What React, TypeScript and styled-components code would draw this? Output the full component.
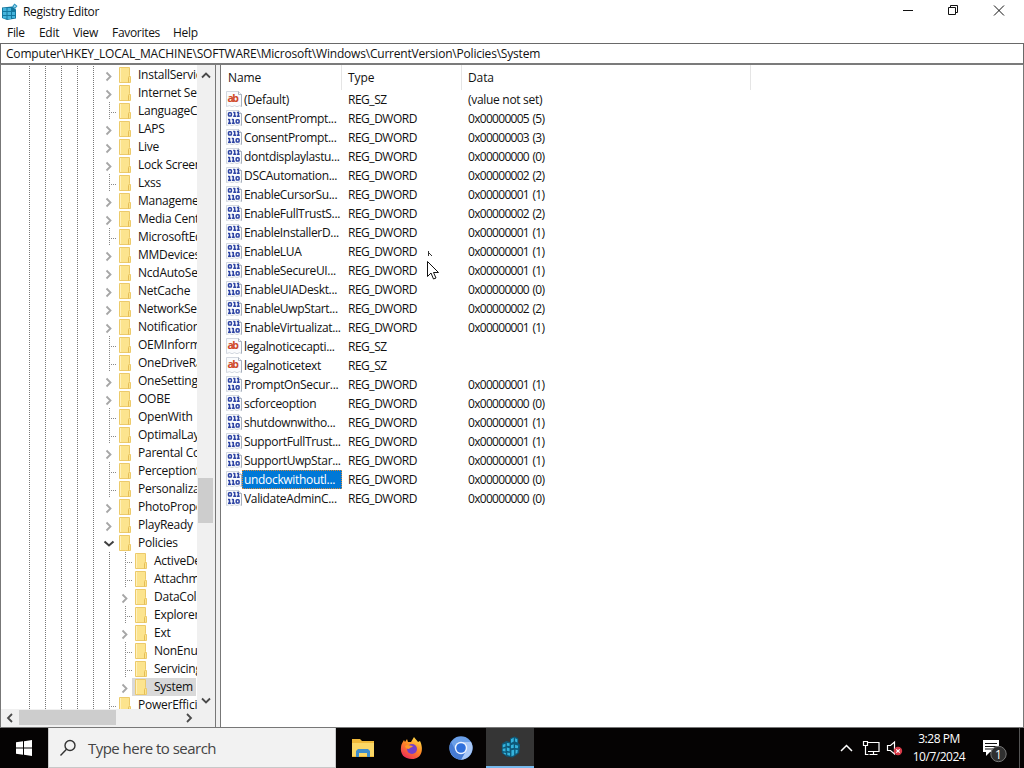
import React from 'react';
import styled, { createGlobalStyle, css } from 'styled-components';

const Global = createGlobalStyle`
  * { box-sizing: border-box; }
  body { margin: 0; overflow: hidden; background: #fff; }
`;

const Screen = styled.div`
  width: 1024px; height: 768px; display: flex; flex-direction: column;
  font-family: "Open Sans", "Noto Sans", sans-serif; font-size: 12px; color: #111; background: #fff;
  white-space: nowrap; overflow: hidden; cursor: default;
`;
const TitleBar = styled.header`height: 24px; display: flex; align-items: center; padding-left: 2px; gap: 5px;`;
const Title = styled.span`flex: 1; line-height: 24px; letter-spacing: -0.34px;`;
const Captions = styled.div`display: flex; height: 24px; svg { display: block; }`;
const MenuBar = styled.nav`height: 19px; display: flex; padding-left: 7px; line-height: 18px;`;
const MenuItem = styled.span<{ $w: number }>`width: ${p => p.$w}px; letter-spacing: -0.3px;`;
const Address = styled.div`
  height: 22px; border: 1px solid #696969; border-bottom: 2px solid #7b7b7b; padding-left: 5px;
  line-height: 20px; letter-spacing: -0.2px;
`;
const Body = styled.main`height: 663px; display: flex; background: #f0f0f0; gap: 4px; border-bottom: 1px solid #777;`;
const TreePane = styled.section`
  width: 216px; border-left: 1px solid #777; border-right: 1px solid #777; display: flex; flex-direction: column; background: #f0f0f0;
`;
const TreeTop = styled.div`height: 644px; display: flex;`;
const Tree = styled.div`width: 196px; overflow: hidden; padding-top: 1px; background: #fff;`;
const TreeRow = styled.div`height: 18px; display: flex; align-items: center; width: 300px; padding-left: 20px;`;
const Guide = styled.svg`width: 16px; height: 18px; flex: none; display: block;`;
const Key = styled.span<{ $on?: boolean }>`
  display: flex; align-items: center; height: 18px; line-height: 18px; margin-left: -1px; padding-left: 3px; padding-right: 3px;
  letter-spacing: -0.25px; background: ${p => (p.$on ? '#d9d9d9' : 'transparent')};
  svg { margin-right: 7px; flex: none; }
`;
const VBar = styled.div`
  width: 18px; background: #f0f0f0; display: flex; flex-direction: column; align-items: center;
  justify-content: space-between; position: relative; padding: 6px 1px 4px 0;
`;
const VThumb = styled.i`position: absolute; left: 1px; top: 413px; width: 15px; height: 45px; background: #cdcdcd;`;
const HBar = styled.div`height: 18px; width: 196px; background: #f0f0f0; display: flex; align-items: center; padding: 0 4px 1px 5px;`;
const HThumb = styled.i`width: 97px; height: 15px; background: #cdcdcd; margin: 0 auto 0 5px;`;
const ListPane = styled.section`flex: 1; background: #fff; border-left: 1px solid #777; border-right: 1px solid #777;`;
const columns = css`display: grid; grid-template-columns: 121px 120px 289px 1fr;`;
const Head = styled.div`${columns} height: 25px; line-height: 25px; letter-spacing: -0.1px;`;
const HeadCell = styled.span`padding-left: 7px; border-right: 1px solid #e5e5e5; &:last-child { border: 0; } &:not(:first-child) { padding-left: 6px; }`;
const Row = styled.div`${columns} height: 19px; line-height: 19px;`;
const NameCell = styled.span`display: flex; align-items: center; padding-left: 5px; svg { flex: none; }`;
const Name = styled.span<{ $on?: boolean }>`
  height: 19px; line-height: 19px; padding: 0 0 0 2px; letter-spacing: -0.33px;
  ${p => p.$on && css`background: #0078d7; color: #fff; width: 100px; outline: 1px dotted #d58a3a; outline-offset: -1px;`}
`;
const TypeCell = styled.span`padding-left: 6px; letter-spacing: -0.48px;`;
const DataCell = styled.span<{ $text: boolean }>`
  padding-left: 6px; letter-spacing: ${p => (p.$text ? -0.3 : -0.7)}px; word-spacing: ${p => (p.$text ? 0 : 1)}px;
`;
const Taskbar = styled.footer`height: 40px; display: flex; background: #050303; color: #fff;`;
const Start = styled.div`width: 48px; display: grid; place-items: center;`;
const Search = styled.div`
  width: 288px; background: #f2f2f2; border: 1px solid #c8c8c8; border-top: 0; color: #444; display: flex; align-items: center;
  font-size: 15px; padding-left: 10px; gap: 11px; letter-spacing: -0.53px;
`;
const TaskButton = styled.div<{ $on?: boolean; $ml?: number }>`
  width: 48px; height: 40px; margin-left: ${p => p.$ml ?? 0}px; display: grid; place-items: center;
  ${p => p.$on && css`background: #353535; border-bottom: 2px solid #76b9ed;`}
`;
const Tray = styled.div`margin-left: auto; display: flex; align-items: center;`;
const Clock = styled.div`width: 66px; text-align: center; line-height: 18px; letter-spacing: -0.48px;`;
const Pointer = styled.svg`position: absolute; left: 426px; top: 249px;`;

const RegIcon = () => (
  <svg width="16" height="18" viewBox="0 0 16 18">
    <path d="M0 4.500L10 3.500l4 3v9l-9 1.500-5-2z" fill="#14779f" />
    <path d="M1 5h3.500v3H1zM5.500 5h3.500v3H5.500zM1 9h3.500v3H1zM5.500 9h3.500v3H5.500zM10 9h3v3h-3zM1 13h3.500v2.500H1zM5.500 13h3.500v3H5.500zM10 13h3v2h-3z" fill="#45b4dc" />
    <path d="M12.500 0.500l3 2.500-2.500 3-3-2.500z" fill="#2f98c2" /><path d="M12.700 2l1.300 1.200-1.200 1.200-1.200-1.200z" fill="#a9def0" />
  </svg>
);
const RegCubes = () => (
  <svg width="21" height="24" viewBox="0 0 23 25">
    <path d="M2 9l5-3 4 1V3l5-2 4 2v5l2 2-1 9-7 5-7-1-5-4z" fill="#0e5878" />
    <path d="M3 10l3-1v3l-3 1zM7.500 8l3 .5v3l-3-.5zM12 4l3-1.500v4L12 8zM16.500 3l2.500 1v3.500l-2.500-1zM3 14.500l3-.5v3.500l-3-.5zM7.500 13l3 1v3.500l-3-1zM12 10.500l3-1v4l-3 .5zM16.500 10l3.500 1-.5 3-3-.5zM4 18.500l2.500.5v2l-2.500-1zM8 18.500l3 .5v3l-3-.7zM12.500 16l3-.5v6l-3 1zM17 15.500l2.500.3-.5 3.200-2 1z" fill="#35b3dc" />
  </svg>
);
const Folder = () => (
  <svg width="12" height="16" viewBox="0 0 12 16">
    <path d="M0.500 0.500h10v8l1 1v6h-11z" fill="#fce48e" stroke="#ecca6b" />
    <path d="M9.500 15.500v-5l1-1.500" fill="none" stroke="#e5bd55" /><path d="M1.500 1v14" stroke="#fff1bd" />
  </svg>
);
const Arrow = ({ d, w = 10, h = 8 }: { d: string; w?: number; h?: number }) => (
  <svg width={w} height={h}><path d={d} fill="none" stroke="#4a4a4a" strokeWidth="1.800" /></svg>
);
const ValueIcon = ({ sz }: { sz: boolean }) => (
  <svg width="16" height="17" viewBox="0 0 16 17">
    <path d="M0.500 0.500h12l3 3v12l-2-.8-2.500 1-2.500-1-2.500 1-2.500-1-3 .8z" fill="#fafbfd" stroke="#c8ced8" strokeWidth=".8" />
    <path d="M12.500 .5v3h3M15.500 3.500v12" fill="none" stroke="#9ca6b4" strokeWidth=".8" />
    {sz ? (
      <text x="1.500" y="11" fontSize="10.500" fontWeight="700" fontFamily="Open Sans" fill="#cf4a2a" textLength="11.500">ab</text>
    ) : (
      <g fill="none" stroke="#2e44a4" strokeWidth="1.500">
        <rect x="2.500" y="2.700" width="2.900" height="3.400" rx=".8" />
        <path d="M8.700 2v4M12.400 2v4M7.200 2.600h1.500M10.900 2.600h1.500M7.200 6.300h3M10.900 6.300h2.800" />
        <path d="M3.500 9v4M7.300 9v4M2 9.600h1.500M5.800 9.600h1.500M2 13.200h3M5.800 13.200h3" />
        <rect x="10.200" y="9.700" width="2.900" height="3.400" rx=".8" />
      </g>
    )}
  </svg>
);

// level 0 sits directly under CurrentVersion; level 1 under Policies
type Node = [label: string, state: '>' | '-' | 'v', level?: number];
const nodes: Node[] = [
  ['InstallService', '>'], ['Internet Settings', '>'], ['LanguageComponents', '-'], ['LAPS', '>'], ['Live', '>'],
  ['Lock Screen', '>'], ['Lxss', '-'], ['Management', '>'], ['Media Center', '>'], ['MicrosoftEdge', '-'],
  ['MMDevices', '>'], ['NcdAutoSetup', '>'], ['NetCache', '>'], ['NetworkServices', '>'], ['Notifications', '>'],
  ['OEMInformation', '-'], ['OneDriveRamps', '-'], ['OneSettings', '>'], ['OOBE', '>'], ['OpenWith', '-'],
  ['OptimalLayout', '-'], ['Parental Controls', '>'], ['PerceptionSimulation', '-'], ['Personalization', '-'],
  ['PhotoPropertyHandler', '>'], ['PlayReady', '>'], ['Policies', 'v'],
  ['ActiveDesktop', '-', 1], ['Attachments', '-', 1], ['DataCollection', '>', 1], ['Explorer', '-', 1], ['Ext', '>', 1],
  ['NonEnum', '-', 1], ['Servicing', '-', 1], ['System', '>', 1], ['PowerEfficiency', '-'],
];
const values: [string, string][] = [
  ['(Default)', '(value not set)'], ['ConsentPrompt...', '5'], ['ConsentPrompt...', '3'], ['dontdisplaylastu...', '0'],
  ['DSCAutomation...', '2'], ['EnableCursorSu...', '1'], ['EnableFullTrustS...', '2'], ['EnableInstallerD...', '1'],
  ['EnableLUA', '1'], ['EnableSecureUI...', '1'], ['EnableUIADeskt...', '0'], ['EnableUwpStart...', '2'],
  ['EnableVirtualizat...', '1'], ['legalnoticecapti...', ''], ['legalnoticetext', ''], ['PromptOnSecur...', '1'],
  ['scforceoption', '0'], ['shutdownwitho...', '1'], ['SupportFullTrust...', '1'], ['SupportUwpStar...', '1'],
  ['undockwithoutl...', '0'], ['ValidateAdminC...', '0'],
];

const Line = () => <Guide><path d="M8.500 0v18" stroke="#777" strokeDasharray="1 1" /></Guide>;
const Branch = ({ state }: { state: Node[1] }) => (
  <Guide>
    {state === '-' && <path d="M8.500 0v18M8 10.500h8" stroke="#888" strokeDasharray="1 1" fill="none" />}
    {state === '>' && <path d="M5.500 6.500l4 4-4 4" stroke="#a6a6a6" strokeWidth="1.800" fill="none" />}
    {state === 'v' && <path d="M3.500 7.500l4.500 4 4.500-4" stroke="#404040" strokeWidth="2" fill="none" />}
  </Guide>
);

export default function App() {
  return (
    <Screen>
      <Global />
      <TitleBar>
        <RegIcon /><Title>Registry Editor</Title>
        <Captions>
          <svg width="138" height="24" fill="none" stroke="#111">
            <path d="M17 10.500h10M108 5.500l10 10M118 5.500l-10 10" />
            <path d="M62.500 7.500h7v7h-7zM64.500 7v-1.500h7v7h-1.500" />
          </svg>
        </Captions>
      </TitleBar>
      <MenuBar>
        <MenuItem $w={32}>File</MenuItem><MenuItem $w={34}>Edit</MenuItem><MenuItem $w={39}>View</MenuItem>
        <MenuItem $w={61}>Favorites</MenuItem><MenuItem $w={40}>Help</MenuItem>
      </MenuBar>
      <Address>Computer\HKEY_LOCAL_MACHINE\SOFTWARE\Microsoft\Windows\CurrentVersion\Policies\System</Address>
      <Body>
        <TreePane>
          <TreeTop>
            <Tree>
              {nodes.map(([label, state, level = 0]) => (
                <TreeRow key={label}>
                  {Array.from({ length: 5 + level }, (_, i) => <Line key={i} />)}
                  <Branch state={state} />
                  <Key $on={label === 'System'}><Folder />{label}</Key>
                </TreeRow>
              ))}
            </Tree>
            <VBar>
              <Arrow d="M1 6.500l4-4 4 4" /><VThumb /><Arrow d="M1 1.500l4 4 4-4" />
            </VBar>
          </TreeTop>
          <HBar>
            <Arrow w={8} h={10} d="M6 1l-4 4 4 4" /><HThumb /><Arrow w={8} h={10} d="M2 1l4 4-4 4" />
          </HBar>
        </TreePane>
        <ListPane>
          <Head><HeadCell>Name</HeadCell><HeadCell>Type</HeadCell><HeadCell>Data</HeadCell><HeadCell /></Head>
          {values.map(([name, v], i) => {
            const sz = v.length !== 1;
            return (
              <Row key={i}>
                <NameCell><ValueIcon sz={sz} /><Name $on={i === 20}>{name}</Name></NameCell>
                <TypeCell>{sz ? 'REG_SZ' : 'REG_DWORD'}</TypeCell>
                <DataCell $text={sz}>{sz ? v : `0x0000000${v} (${v})`}</DataCell>
              </Row>
            );
          })}
        </ListPane>
      </Body>
      <Taskbar>
        <Start>
          <svg width="16" height="16" fill="#fff"><path d="M0 2.300l7-1v6.200H0zM8 1.200L16 0v7.500H8zM0 8.500h7v6.200l-7-1zM8 8.500h8V16l-8-1.200z" /></svg>
        </Start>
        <Search>
          <svg width="18" height="18" fill="none" stroke="#333" strokeWidth="1.400"><circle cx="11" cy="6.500" r="5" /><path d="M7.500 10.200L1.500 16.500" /></svg>
          Type here to search
        </Search>
        <TaskButton $ml={3}>
          <svg width="22" height="20"><path d="M0 1h8l2 2h12v16H0z" fill="#f0b93a" /><path d="M0 5h22v13H0z" fill="#fbd766" /><path d="M4 19v-6l2-2h10l2 2v6h-3v-4H7v4z" fill="#3f8dcc" /></svg>
        </TaskButton>
        <TaskButton $ml={1}>
          <svg width="24" height="24" viewBox="0 0 24 24">
            <defs><linearGradient id="ff" x1=".8" y1="0" x2=".2" y2="1"><stop stopColor="#ffe14a" /><stop offset=".45" stopColor="#ff8a25" /><stop offset="1" stopColor="#ee255b" /></linearGradient></defs>
            <path d="M4 4l1 2 2-3 1 3 3 0 3-5c1 2 3 3 4 5l2-1c4 8 2 18-8 18C4 23 0 18 1 11c0-3 2-5 3-7z" fill="url(#ff)" />
            <circle cx="12" cy="13" r="5" fill="#7440c8" /><path d="M5 10c3-2 5 0 8 0-1 2-3 1-4 3-2 0-4-1-4-3z" fill="#ff9a28" />
          </svg>
        </TaskButton>
        <TaskButton $ml={1}>
          <svg width="24" height="24"><circle cx="12" cy="12" r="11.700" fill="#6a9fe8" /><path d="M12 6h10a12 12 0 0 1-10 17.700l5-9z" fill="#a9c8f7" /><path d="M2 6a12 12 0 0 0 10 17.700l5-9-10 0z" fill="#467bd3" /><circle cx="12" cy="12" r="6.200" fill="#eef4ff" /><circle cx="12" cy="12" r="4.800" fill="#2f70dc" /></svg>
        </TaskButton>
        <TaskButton $on $ml={1}><RegCubes /></TaskButton>
        <Tray>
          <svg width="70" height="24" fill="none" stroke="#fff" strokeWidth="1.200">
            <path d="M5 15l5.500-5.500L16 15" strokeWidth="1.500" />
            <path d="M31 6.500h12v9H32M37.500 15.500v3M33.500 18.500h8M27.500 5.500h4v4h-4zM29.500 9.500v9h3" />
            <path d="M51.500 9.500h3l4-3.500v12l-4-3.500h-3z" />
            <circle cx="62" cy="15" r="4.200" fill="#d83a48" stroke="none" /><path d="M60.300 13.300l3.400 3.400M63.700 13.300l-3.400 3.400" />
          </svg>
          <Clock>3:28 PM<br />10/7/2024</Clock>
          <svg width="52" height="40">
            <path d="M11 12h16v12H18l-4 4v-4h-3z" fill="#fff" /><path d="M13 15.500h12M13 18.500h12M13 21h8" stroke="#111" />
            <circle cx="26.500" cy="26" r="7.700" fill="#303030" stroke="#777" />
            <text x="26.500" y="30.500" fontSize="12" textAnchor="middle" fill="#fff">1</text>
            <path d="M47.500 0v40" stroke="#555" />
          </svg>
        </Tray>
      </Taskbar>
      <Pointer width="14" height="32">
        <path d="M2.500 2v5M2 3l4 4" stroke="#333" fill="none" />
        <path d="M1.500 12.500v15l3.500-3.500 2.500 6 2.500-1-2.500-5.500h5z" fill="#fff" stroke="#111" />
      </Pointer>
    </Screen>
  );
}
